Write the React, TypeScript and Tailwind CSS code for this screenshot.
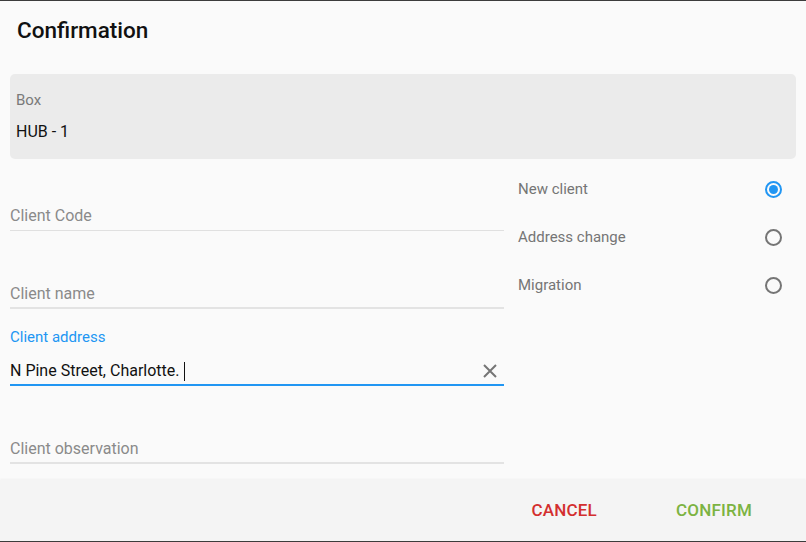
import React from "react";

function Radio({ checked }: { checked?: boolean }) {
  return (
    <div
      className={
        "w-[17px] h-[17px] rounded-full border-2 flex items-center justify-center " +
        (checked ? "border-[#2196f3]" : "border-[#757575]")
      }
    >
      {checked && <div className="w-[9px] h-[9px] rounded-full bg-[#2196f3]" />}
    </div>
  );
}

export default function App() {
  return (
    <div
      className="w-[806px] h-[542px] bg-[#fafafa] flex flex-col border-t border-b border-[#3c3c3c] overflow-hidden"
      style={{ fontFamily: "Roboto, 'Noto Sans', sans-serif" }}
    >
      <div className="px-[17px] pt-[15px] h-[73px]">
        <h1 className="text-[22.5px] leading-[28px] font-medium text-[#111]">Confirmation</h1>
      </div>
      <div className="mx-[10px] h-[85px] rounded-[5px] bg-[#ebebeb] px-[6px] pt-[16px] flex flex-col">
        <div className="text-[15px] leading-[20px] text-[#7a7a7a]">Box</div>
        <div className="mt-[12px] text-[16px] leading-[20px] text-[#111]">HUB - 1</div>
      </div>
      <div className="flex flex-1 px-[10px]">
        <div className="w-[494px] flex flex-col">
          <div className="h-[72px] flex flex-col justify-end">
            <div className="text-[16px] leading-[20px] text-[#8a8a8a] pb-[4px]">Client Code</div>
            <div className="h-px bg-[#e0e0e0]" />
          </div>
          <div className="h-[78px] flex flex-col justify-end">
            <div className="text-[16px] leading-[20px] text-[#8a8a8a] pb-[3px]">Client name</div>
            <div className="h-[2px] bg-[#e3e3e3]" />
          </div>
          <div className="pt-[18px] flex flex-col">
            <div className="text-[15px] leading-[20px] text-[#2196f3]">Client address</div>
            <div className="mt-[14px] flex items-center pb-[3px]">
              <div className="flex-1 text-[16px] leading-[20px] text-[#111] flex items-center">
                <span>N Pine Street, Charlotte.</span>
                <span className="ml-[4px] inline-block w-px h-[19px] bg-[#111]" />
              </div>
              <svg width="16" height="16" viewBox="0 0 16 16" className="mr-[6px]">
                <path d="M2 2 L14 14 M14 2 L2 14" stroke="#757575" strokeWidth="2" />
              </svg>
            </div>
            <div className="h-[2px] bg-[#2196f3]" />
          </div>
          <div className="h-[78px] flex flex-col justify-end">
            <div className="text-[16px] leading-[20px] text-[#8a8a8a] pb-[3px]">Client observation</div>
            <div className="h-[2px] bg-[#e3e3e3]" />
          </div>
        </div>
        <div className="flex-1 pl-[14px] pr-[14px] pt-[20px] flex flex-col">
          {[
            ["New client", true],
            ["Address change", false],
            ["Migration", false],
          ].map(([label, checked]) => (
            <div key={label as string} className="h-[48px] flex items-start">
              <div className="flex-1 h-[20px] flex items-center text-[15px] leading-[20px] text-[#757575]">
                {label as string}
              </div>
              <div className="h-[20px] flex items-center">
                <Radio checked={checked as boolean} />
              </div>
            </div>
          ))}
        </div>
      </div>
      <div className="h-[61px] bg-[#f4f4f4] shadow-[0_-1px_2px_rgba(0,0,0,0.04)] flex items-center justify-end pr-[54px] gap-[79px]">
        <button className="text-[17px] font-medium text-[#d32f2f] tracking-[0.2px]">CANCEL</button>
        <button className="text-[17px] font-medium text-[#7cb342] tracking-[0.2px]">CONFIRM</button>
      </div>
    </div>
  );
}
